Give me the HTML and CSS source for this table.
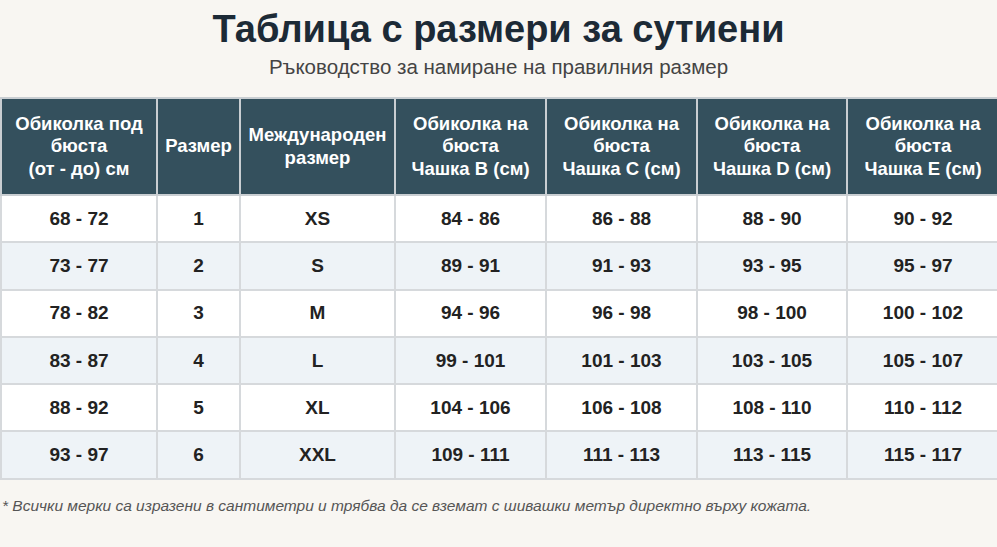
FILE: index.html
```html
<!DOCTYPE html>
<html lang="bg">
<head>
<meta charset="utf-8">
<title>Таблица с размери за сутиени</title>
<link rel="stylesheet" href="styles.css">
</head>
<body>
<header class="intro">
  <h1 class="title">Таблица с размери за сутиени</h1>
  <p class="subtitle">Ръководство за намиране на правилния размер</p>
</header>
<table class="sizes">
  <colgroup>
    <col class="c1"><col class="c2"><col class="c3"><col class="c4"><col class="c5"><col class="c6"><col class="c7">
  </colgroup>
  <thead>
    <tr>
      <th>Обиколка под<br>бюста<br>(от - до) см</th>
      <th>Размер</th>
      <th>Международен<br>размер</th>
      <th>Обиколка на<br>бюста<br>Чашка B (см)</th>
      <th>Обиколка на<br>бюста<br>Чашка C (см)</th>
      <th>Обиколка на<br>бюста<br>Чашка D (см)</th>
      <th>Обиколка на<br>бюста<br>Чашка E (см)</th>
    </tr>
  </thead>
  <tbody>
    <tr><td>68 - 72</td><td>1</td><td>XS</td><td>84 - 86</td><td>86 - 88</td><td>88 - 90</td><td>90 - 92</td></tr>
    <tr><td>73 - 77</td><td>2</td><td>S</td><td>89 - 91</td><td>91 - 93</td><td>93 - 95</td><td>95 - 97</td></tr>
    <tr><td>78 - 82</td><td>3</td><td>M</td><td>94 - 96</td><td>96 - 98</td><td>98 - 100</td><td>100 - 102</td></tr>
    <tr><td>83 - 87</td><td>4</td><td>L</td><td>99 - 101</td><td>101 - 103</td><td>103 - 105</td><td>105 - 107</td></tr>
    <tr><td>88 - 92</td><td>5</td><td>XL</td><td>104 - 106</td><td>106 - 108</td><td>108 - 110</td><td>110 - 112</td></tr>
    <tr><td>93 - 97</td><td>6</td><td>XXL</td><td>109 - 111</td><td>111 - 113</td><td>113 - 115</td><td>115 - 117</td></tr>
  </tbody>
</table>
<p class="note">* Всички мерки са изразени в сантиметри и трябва да се вземат с шивашки метър директно върху кожата.</p>
</body>
</html>
```
FILE: styles.css
```css
html, body {
  margin: 0;
  padding: 0;
  background: #f8f6f2;
  font-family: "Liberation Sans", Arial, sans-serif;
}

.intro {
  text-align: center;
  padding-top: 7px;
  height: 91px;
  box-sizing: border-box;
}

.title {
  margin: 0;
  font-size: 38px;
  line-height: 44px;
  font-weight: bold;
  color: #1c2a36;
}

.subtitle {
  margin: 4px 0 0;
  font-size: 20.5px;
  line-height: 24px;
  color: #444;
}

.sizes {
  border-collapse: collapse;
  table-layout: fixed;
  width: 998px;
  margin-top: 6px;
}

.c1 { width: 156px; }
.c2 { width: 83px; }
.c3 { width: 155px; }
.c4 { width: 151px; }
.c5 { width: 151px; }
.c6 { width: 150px; }
.c7 { width: 152px; }

.sizes th {
  background: #34505d;
  color: #fff;
  font-size: 18.5px;
  line-height: 22.5px;
  font-weight: bold;
  height: 97px;
  padding: 0 2px;
  border: 2px solid #c9ced2;
  box-sizing: border-box;
}

.sizes td {
  text-align: center;
  font-size: 19px;
  font-weight: bold;
  color: #222;
  height: 45.3px;
  padding: 0;
  border: 2px solid #d6d9dc;
  background: #fff;
}

.sizes tbody tr:nth-child(even) td {
  background: #eef3f7;
}

.note {
  margin: 17px 0 0 2px;
  font-size: 15.5px;
  font-style: italic;
  color: #555;
}
```
